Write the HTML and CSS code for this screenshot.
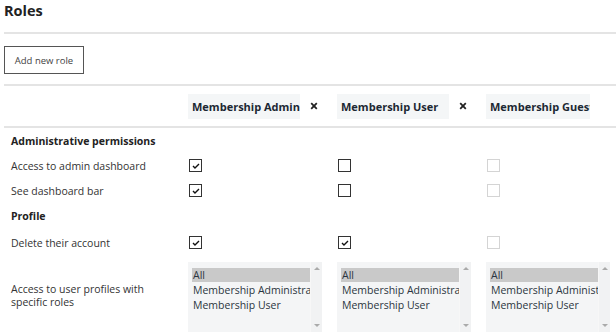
FILE: index.html
```html
<!DOCTYPE html>
<html>
<head>
<meta charset="utf-8">
<link rel="stylesheet" href="styles.css">
</head>
<body>
<div class="page">
  <h1 class="title">Roles</h1>
  <div class="rule"></div>
  <div class="toolbar"><button class="btn">Add new role</button></div>
  <div class="rule"></div>
  <div class="row head-row">
    <div class="label"></div>
    <div class="cell"><div class="role-name">Membership Admin</div><span class="remove"><svg width="8" height="8" viewBox="0 0 8 8"><path d="M1.2 1.2L6.8 6.8M6.8 1.2L1.2 6.8" stroke="#222" stroke-width="1.8"/></svg></span></div>
    <div class="cell"><div class="role-name">Membership User</div><span class="remove"><svg width="8" height="8" viewBox="0 0 8 8"><path d="M1.2 1.2L6.8 6.8M6.8 1.2L1.2 6.8" stroke="#222" stroke-width="1.8"/></svg></span></div>
    <div class="cell"><div class="role-name narrow">Membership Guest</div></div>
  </div>
  <div class="rule"></div>

  <div class="row section h25"><div class="label strong">Administrative permissions</div></div>
  <div class="row h25">
    <div class="label">Access to admin dashboard</div>
    <div class="cell"><span class="cb on"><svg width="8" height="6" viewBox="0 0 8 6"><path d="M1 3L3 5L7 1" fill="none" stroke="#111" stroke-width="1.4"/></svg></span></div>
    <div class="cell"><span class="cb"></span></div>
    <div class="cell"><span class="cb off"></span></div>
  </div>
  <div class="row h25">
    <div class="label">See dashboard bar</div>
    <div class="cell"><span class="cb on"><svg width="8" height="6" viewBox="0 0 8 6"><path d="M1 3L3 5L7 1" fill="none" stroke="#111" stroke-width="1.4"/></svg></span></div>
    <div class="cell"><span class="cb"></span></div>
    <div class="cell"><span class="cb off"></span></div>
  </div>
  <div class="row section h26"><div class="label strong">Profile</div></div>
  <div class="row h27">
    <div class="label">Delete their account</div>
    <div class="cell"><span class="cb on"><svg width="8" height="6" viewBox="0 0 8 6"><path d="M1 3L3 5L7 1" fill="none" stroke="#111" stroke-width="1.4"/></svg></span></div>
    <div class="cell"><span class="cb on"><svg width="8" height="6" viewBox="0 0 8 6"><path d="M1 3L3 5L7 1" fill="none" stroke="#111" stroke-width="1.4"/></svg></span></div>
    <div class="cell"><span class="cb off"></span></div>
  </div>
  <div class="row list-row">
    <div class="label wrap">Access to user profiles with specific roles</div>
    <div class="cell">
      <div class="listbox">
        <div class="options"><div class="opt sel">All</div><div class="opt">Membership Administrator</div><div class="opt">Membership User</div></div>
        <div class="sbar"><span class="up"></span><span class="down"></span></div>
      </div>
    </div>
    <div class="cell">
      <div class="listbox">
        <div class="options"><div class="opt sel">All</div><div class="opt">Membership Administrator</div><div class="opt">Membership User</div></div>
        <div class="sbar"><span class="up"></span><span class="down"></span></div>
      </div>
    </div>
    <div class="cell">
      <div class="listbox narrow">
        <div class="options"><div class="opt sel">All</div><div class="opt">Membership Administrator</div><div class="opt">Membership User</div></div>
        <div class="sbar"><span class="up"></span><span class="down"></span></div>
      </div>
    </div>
  </div>
</div>
</body>
</html>
```

FILE: styles.css
```css
* { box-sizing: border-box; }
html, body { margin: 0; padding: 0; background: #fff; }
body {
  font-family: "Open Sans", "Liberation Sans", sans-serif;
  font-size: 10.5px;
  color: #333;
  overflow: hidden;
  width: 616px;
  height: 335px;
}
.page { padding-left: 4px; }
.title {
  margin: 0;
  height: 32px;
  font-size: 14.5px;
  font-weight: 700;
  line-height: 21px;
  color: #222;
}
.rule { height: 2px; background: #e4e4e4; }
.toolbar { height: 50px; display: flex; align-items: center; padding-top: 2px; }
.btn {
  width: 80px;
  height: 28px;
  border: 1px solid #555;
  background: #fff;
  font-family: "Open Sans", "Liberation Sans", sans-serif;
  font-size: 9.5px;
  color: #444;
  padding: 0;
  margin: 0;
}
.row { display: grid; grid-template-columns: 184px 149px 149px 1fr; align-items: center; }
.head-row { height: 40px; }
.h25 { height: 25px; }
.h26 { height: 26px; }
.h27 { height: 27px; }
.label { padding-left: 7px; color: #333; white-space: nowrap; }
.label.strong { font-weight: 700; color: #222; }
.label.wrap { white-space: normal; width: 150px; line-height: 13px; }
.cell { display: flex; align-items: center; min-width: 0; overflow: hidden; }
.role-name {
  width: 112px;
  height: 25px;
  background: #f4f6f7;
  font-weight: 700;
  font-size: 11px;
  color: #1c2833;
  line-height: 25px;
  padding-left: 4px;
  white-space: nowrap;
  overflow: hidden;
}
.role-name.narrow { width: 104px; }
.remove { display: flex; margin-left: 10px; }
.cb {
  width: 13px;
  height: 13px;
  border: 1px solid #333;
  display: flex;
  align-items: center;
  justify-content: center;
  margin-left: 1px;
  background: #fff;
}
.cb.off { border-color: #d4d4d4; }
.list-row { height: 79px; align-items: start; }
.list-row .label { align-self: center; padding-top: 0; }
.list-row .cell { padding-top: 6px; overflow: visible; }
.listbox {
  width: 134px;
  height: 70px;
  background: #f4f5f6;
  display: flex;
  flex-shrink: 0;
}
.listbox.narrow { width: 124px; }
.options { flex: 1; min-width: 0; padding: 6px 0 0 4px; overflow: hidden; }
.opt { height: 15px; line-height: 14px; color: #2b3540; white-space: nowrap; overflow: hidden; padding-left: 1px; }
.opt.sel { background: #c9c9c9; height: 14px; margin-bottom: 1px; }
.sbar {
  width: 12px;
  background: #f1f2f3;
  position: relative;
  border-left: 1px solid #f7f7f7;
}
.sbar .up, .sbar .down {
  position: absolute;
  left: 3px;
  width: 0; height: 0;
  border-left: 3px solid transparent;
  border-right: 3px solid transparent;
}
.sbar .up { top: 5px; border-bottom: 3px solid #aaa; }
.sbar .down { bottom: 5px; border-top: 3px solid #aaa; }
```
